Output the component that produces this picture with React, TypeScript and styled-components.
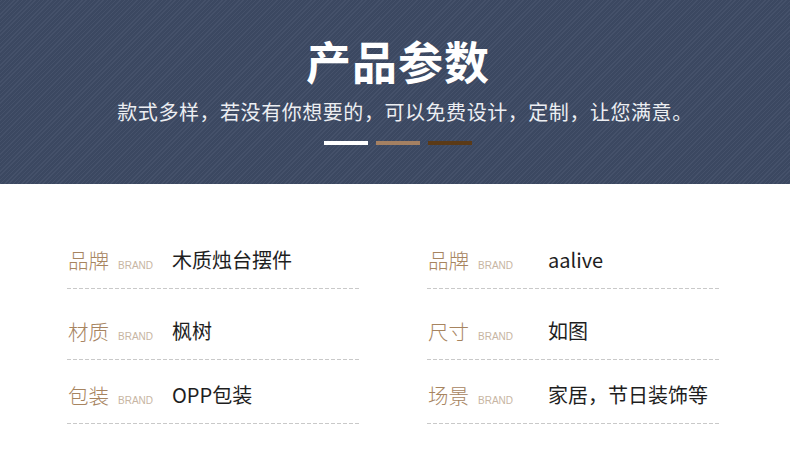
import React from "react";
import styled, { createGlobalStyle } from "styled-components";

const GlobalStyle = createGlobalStyle`
  html, body {
    margin: 0;
    padding: 0;
    background: #fff;
  }
  body {
    font-family: "Noto Sans CJK SC", "Noto Sans", sans-serif;
  }
`;

const Page = styled.div`
  width: 790px;
  height: 466px;
  overflow: hidden;
  background: #fff;
`;

const Banner = styled.header`
  height: 184px;
  box-sizing: border-box;
  padding: 30px 0 0 6px;
  display: flex;
  flex-direction: column;
  align-items: center;
  background-color: #3e4b65;
  background-image: repeating-linear-gradient(
    -45deg,
    rgba(255, 255, 255, 0.035) 0px,
    rgba(255, 255, 255, 0.035) 1px,
    rgba(0, 0, 0, 0.045) 1px,
    rgba(0, 0, 0, 0.045) 3px
  );
`;

const Title = styled.h1`
  margin: 0;
  font-size: 45px;
  line-height: 62px;
  font-weight: 700;
  color: #fff;
  letter-spacing: 1px;
`;

const Subtitle = styled.p`
  margin: 5px 0 0;
  padding-left: 14px;
  font-size: 20px;
  line-height: 30px;
  color: #eceef2;
  letter-spacing: 0.55px;
`;

const Bars = styled.div`
  display: flex;
  gap: 8px;
  margin-top: 14px;
`;

const Bar = styled.span<{ $color: string }>`
  display: block;
  width: 44px;
  height: 4px;
  background: ${(p) => p.$color};
`;

const Table = styled.section`
  display: grid;
  grid-template-columns: 293px 293px;
  column-gap: 67px;
  padding: 48px 0 0 67px;
`;

const Column = styled.div`
  display: flex;
  flex-direction: column;
`;

const Row = styled.div<{ $top: number }>`
  position: relative;
  display: flex;
  align-items: center;
  height: 57px;
  box-sizing: border-box;
  padding: 0 0 2px 1px;
  margin-top: ${(p) => p.$top}px;

  &::after {
    content: "";
    position: absolute;
    left: 0;
    right: 0;
    bottom: 0;
    height: 1px;
    background-image: repeating-linear-gradient(
      90deg,
      #c9c9c9 0px,
      #c9c9c9 4px,
      transparent 4px,
      transparent 6px
    );
  }
`;

const Label = styled.span`
  font-size: 20.5px;
  font-weight: 300;
  color: #a7845f;
  width: 50px;
`;

const Brand = styled.span<{ $w: number }>`
  font-family: "Liberation Sans", Arial, sans-serif;
  font-size: 10px;
  color: #c7b5a2;
  margin-top: 12px;
  width: ${(p) => p.$w}px;
`;

const Value = styled.span`
  font-size: 20px;
  color: #1e1e1e;
`;

type Item = { label: string; value: string; top: number };

const left: Item[] = [
  { label: "品牌", value: "木质烛台摆件", top: 0 },
  { label: "材质", value: "枫树", top: 14 },
  { label: "包装", value: "OPP包装", top: 7 },
];

const right: Item[] = [
  { label: "品牌", value: "aalive", top: 0 },
  { label: "尺寸", value: "如图", top: 14 },
  { label: "场景", value: "家居，节日装饰等", top: 7 },
];

function ParamColumn({ items, brandWidth }: { items: Item[]; brandWidth: number }) {
  return (
    <Column>
      {items.map((it) => (
        <Row key={it.label + it.value} $top={it.top}>
          <Label>{it.label}</Label>
          <Brand $w={brandWidth}>BRAND</Brand>
          <Value>{it.value}</Value>
        </Row>
      ))}
    </Column>
  );
}

export default function App() {
  return (
    <Page>
      <GlobalStyle />
      <Banner>
        <Title>产品参数</Title>
        <Subtitle>款式多样，若没有你想要的，可以免费设计，定制，让您满意。</Subtitle>
        <Bars>
          <Bar $color="#ffffff" />
          <Bar $color="#a48062" />
          <Bar $color="#5b3a17" />
        </Bars>
      </Banner>
      <Table>
        <ParamColumn items={left} brandWidth={54} />
        <ParamColumn items={right} brandWidth={70} />
      </Table>
    </Page>
  );
}
